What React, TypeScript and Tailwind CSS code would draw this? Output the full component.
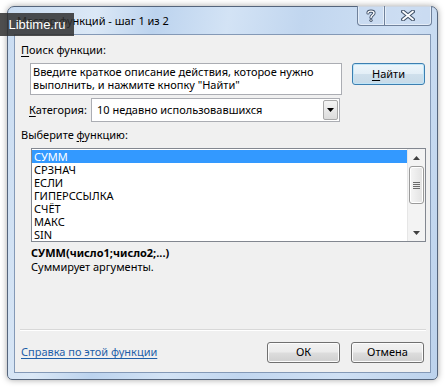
import React from 'react';

const FONT = { fontFamily: '"Noto Sans", "Open Sans", sans-serif' };

const functions = ['СУММ', 'СРЗНАЧ', 'ЕСЛИ', 'ГИПЕРССЫЛКА', 'СЧЁТ', 'МАКС', 'SIN'];

const WinButton = ({ label, u, focused, className = '' }: { label: string; u?: number; focused?: boolean; className?: string }) => {
  const text =
    u === undefined ? (
      label
    ) : (
      <>
        <span className="underline underline-offset-2">{label[u]}</span>
        {label.slice(u + 1)}
      </>
    );
  return (
    <div
      className={
        'flex items-center justify-center rounded-[3px] border text-[11px] text-black ' +
        (focused
          ? 'border-[#3c7fb1] bg-[linear-gradient(to_bottom,#eef6fb_0%,#e3eff7_48%,#cfe0ec_52%,#c7dae8_100%)] shadow-[inset_0_0_0_1px_#bfe5f8] '
          : 'border-[#707070] bg-[linear-gradient(to_bottom,#f2f2f2_0%,#ebebeb_48%,#dddddd_52%,#cfcfcf_100%)] shadow-[inset_0_0_0_1px_#fcfcfc] ') +
        className
      }
    >
      {text}
    </div>
  );
};

const ScrollBar = () => (
  <div className="flex h-full w-[18px] flex-col items-center border-l border-[#e6e6e6] bg-[#f3f3f3]">
    <div className="flex h-[17px] w-full items-center justify-center">
      <svg width="7" height="4" viewBox="0 0 7 4">
        <path d="M0 4 L3.5 0 L7 4 Z" fill="#404040" />
      </svg>
    </div>
    <div className="flex h-[38px] w-[15px] items-center justify-center rounded-[3px] border border-[#9a9a9a] bg-[linear-gradient(to_right,#f5f5f5,#e2e2e2)] shadow-[inset_0_0_0_1px_#ffffff]">
      <svg width="7" height="7" viewBox="0 0 7 7">
        <path d="M0 0.5 H7 M0 2.5 H7 M0 4.5 H7 M0 6.5 H7" stroke="#6b6b6b" strokeWidth="1" />
      </svg>
    </div>
    <div className="flex-1" />
    <div className="flex h-[17px] w-full items-center justify-center">
      <svg width="7" height="4" viewBox="0 0 7 4">
        <path d="M0 0 L3.5 4 L7 0 Z" fill="#404040" />
      </svg>
    </div>
  </div>
);

export default function App() {
  return (
    <div className="relative h-[390px] w-[448px] overflow-hidden bg-white" style={FONT}>
      {/* dialog window */}
      <div className="ml-[7px] mt-[6px] flex h-[374px] w-[431px] flex-col rounded-t-[7px] rounded-b-[5px] border border-[#55657c] bg-[linear-gradient(100deg,#c9dcf2_0%,#dbe8f6_18%,#bcd3ee_30%,#d3e3f5_45%,#c1d6ef_60%,#cfe0f4_80%,#bcd2ec_100%)] shadow-[0_0_6px_rgba(0,0,0,0.35)]">
        {/* title bar */}
        <div className="relative flex h-[27px] items-center pl-[9px]">
          <span className="text-[11px] leading-none text-black">Мастер функций - шаг 1 из 2</span>
          <div className="absolute right-[5px] top-[-1px] flex h-[20px]">
            <div className="flex w-[28px] items-center justify-center rounded-bl-[4px] border border-t-0 border-[#6f819b] bg-[#c9dbf0]/60 shadow-[inset_0_0_0_1px_rgba(255,255,255,0.5)]">
              <svg width="10" height="13" viewBox="0 0 10 13">
                <path d="M2 4 C2 1.5 8 1.5 8 4 C8 6 5 6 5 8.5" fill="none" stroke="#44546b" strokeWidth="3.2" strokeLinecap="round" />
                <path d="M2 4 C2 1.5 8 1.5 8 4 C8 6 5 6 5 8.5" fill="none" stroke="#ffffff" strokeWidth="1.4" strokeLinecap="round" />
                <circle cx="5" cy="11.3" r="1.6" fill="#44546b" />
                <circle cx="5" cy="11.3" r="0.7" fill="#ffffff" />
              </svg>
            </div>
            <div className="flex w-[47px] items-center justify-center rounded-br-[4px] border border-l-0 border-t-0 border-[#6f819b] bg-[#c9dbf0]/60 shadow-[inset_0_0_0_1px_rgba(255,255,255,0.5)]">
              <svg width="14" height="11" viewBox="0 0 14 11">
                <path d="M2 1.5 L12 9.5 M12 1.5 L2 9.5" stroke="#44546b" strokeWidth="4" strokeLinecap="round" />
                <path d="M2 1.5 L12 9.5 M12 1.5 L2 9.5" stroke="#ffffff" strokeWidth="1.8" strokeLinecap="round" />
              </svg>
            </div>
          </div>
        </div>

        {/* client area */}
        <div className="mx-[6px] flex h-[339px] flex-col border border-[#8499b6] bg-[#f0f0f0] text-[11px] text-black">
          <div className="mt-[7px] pl-[6px] leading-[16px]">
            <span className="underline underline-offset-2">П</span>оиск функции:
          </div>

          <div className="ml-[15px] mt-[5px] flex items-start gap-[10px]">
            <div className="h-[32px] w-[312px] border border-[#abadb3] bg-white px-[2px] pt-[1px] leading-[13px]">
              Введите краткое описание действия, которое нужно выполнить, и нажмите кнопку "Найти"
            </div>
            <WinButton label="Найти" u={0} focused className="h-[22px] w-[73px]" />
          </div>

          <div className="mt-[3px] flex h-[24px] items-center pl-[14px]">
            <span className="w-[62px]">
              <span className="underline underline-offset-2">К</span>атегория:
            </span>
            <div className="flex h-[24px] w-[249px] items-center justify-between border border-[#abadb3] bg-white pl-[5px] pr-[1px]">
              <span>10 недавно использовавшихся</span>
              <div className="flex h-[20px] w-[15px] items-center justify-center rounded-[2px] border border-[#a8a8a8] bg-[linear-gradient(to_bottom,#f4f4f4,#dcdcdc)]">
                <svg width="7" height="4" viewBox="0 0 7 4">
                  <path d="M0 0 L3.5 4 L7 0 Z" fill="#000" />
                </svg>
              </div>
            </div>
          </div>

          <div className="mt-[5px] pl-[6px] leading-[16px]">
            Выберите <span className="underline underline-offset-2">ф</span>ункцию:
          </div>

          <div className="ml-[16px] mt-[5px] flex h-[94px] w-[395px] border border-[#828790] bg-white">
            <div className="flex-1 pt-[1px]">
              {functions.map((f, i) => (
                <div
                  key={f}
                  className={
                    'h-[13px] overflow-hidden pl-[2px] leading-[13px] ' + (i === 0 ? 'bg-[#3399ff] text-white' : '')
                  }
                >
                  {f}
                </div>
              ))}
            </div>
            <ScrollBar />
          </div>

          <div className="mt-[4px] pl-[16px] font-bold leading-[14px]">СУММ(число1;число2;...)</div>
          <div className="pl-[16px] leading-[14px]">Суммирует аргументы.</div>

          <div className="ml-[5px] mt-[55px] w-[406px] border-t border-[#d8d8d8] shadow-[0_1px_0_#ffffff]" />

          <div className="mt-[12px] flex items-center pl-[6px] pr-[6px]">
            <span className="text-[#1e5fa8] underline underline-offset-2">Справка по этой функции</span>
            <div className="flex-1" />
            <WinButton label="ОК" className="h-[21px] w-[73px]" />
            <WinButton label="Отмена" className="ml-[11px] h-[21px] w-[73px]" />
          </div>
        </div>
      </div>

      {/* watermark */}
      <div
        className="absolute left-0 top-[13px] flex h-[23px] w-[74px] items-center justify-center bg-[#2f2f2f]/85 text-[13px] text-white"
        style={{ fontFamily: '"Liberation Sans", Arial, sans-serif' }}
      >
        Libtime.ru
      </div>
    </div>
  );
}
